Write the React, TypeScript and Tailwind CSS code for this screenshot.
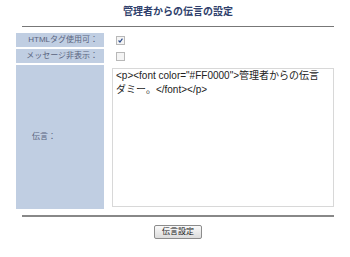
const FONT = "font-['Liberation_Sans','Noto_Sans_CJK_JP',sans-serif]"

function Check({ checked }: { readonly checked: boolean }) {
  return (
    <span className="flex h-[9px] w-[9px] items-center justify-center border border-[#b8b8b8] bg-[#f4f4f4]">
      {checked && (
        <svg viewBox="0 0 9 9" className="h-[9px] w-[9px]">
          <path d="M2 4.5 L3.8 6.5 L7 2" fill="none" stroke="#2a4a8a" strokeWidth="1.5" />
        </svg>
      )}
    </span>
  )
}

const LABEL =
  "flex items-center justify-end whitespace-nowrap bg-[#c0cee2] pr-[6px] text-[8px] text-[#5a6480]"

export default function App() {
  return (
    <div className={`h-[257px] w-[350px] bg-white ${FONT}`}>
      <div className="ml-[22px] w-[312px] pt-[5px]">
        <h1 className="text-center text-[10px] font-bold leading-[14px] text-[#2f3f6c]">
          管理者からの伝言の設定
        </h1>
        <div className="mt-[7px] h-px bg-[#777]" />
      </div>

      <div className="ml-[16px] mt-[6px] grid w-[318px] grid-cols-[88px_1fr] gap-y-[2px]">
        <div className={`${LABEL} h-[14px]`}>HTMLタグ使用可：</div>
        <div className="flex items-center pl-[12px]">
          <Check checked />
        </div>
        <div className={`${LABEL} h-[14px]`}>メッセージ非表示：</div>
        <div className="flex items-center pl-[12px]">
          <Check checked={false} />
        </div>
        <div className={`${LABEL} h-[144px] !justify-start pl-[16px]`}>伝言：</div>
        <div className="flex items-center pl-[8px]">
          <textarea
            readOnly
            className="h-[139px] w-[222px] resize-none overflow-hidden whitespace-pre border border-[#d8d8d8] px-[3px] pt-0 text-[10px] leading-[14px] text-[#222] outline-none"
            value={'<p><font color="#FF0000">管理者からの伝言\nダミー。</font></p>'}
          />
        </div>
      </div>

      <div className="ml-[22px] mt-[6px] w-[312px]">
        <div className="h-[2px] bg-[#888]" />
        <div className="mt-[8px] flex justify-center">
          <button
            type="button"
            className="h-[14px] w-[48px] rounded-[2px] border border-[#8c8c8c] bg-gradient-to-b from-[#fafafa] to-[#dcdcdc] text-[8px] leading-[12px] text-[#222]"
          >
            伝言設定
          </button>
        </div>
      </div>
    </div>
  )
}
